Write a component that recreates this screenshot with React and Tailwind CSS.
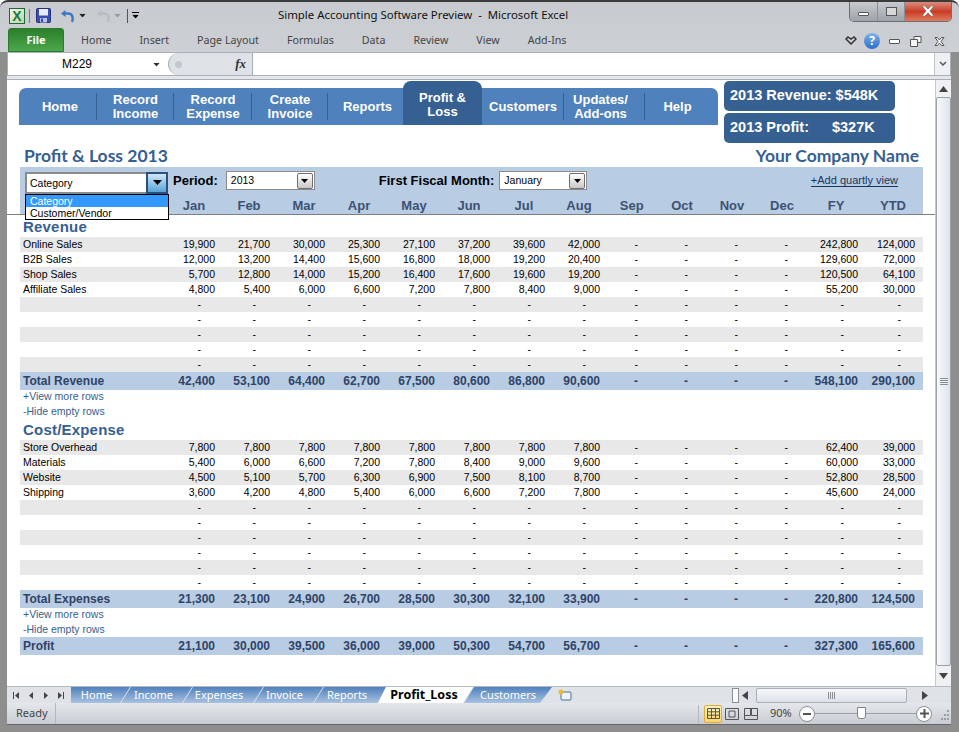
import React from 'react';

const navItems = [
  { label: ['Home'], width: 'w-[78px]', pad: 'pl-[4px]' },
  { label: ['Record', 'Income'], width: 'w-[77px]' },
  { label: ['Record', 'Expense'], width: 'w-[78px]' },
  { label: ['Create', 'Invoice'], width: 'w-[76px]' },
  { label: ['Reports'], width: 'w-[75px]', pad: 'pl-[4px]' },
  { label: ['Profit &', 'Loss'], width: 'w-[79px]', active: true },
  { label: ['Customers'], width: 'w-[82px]' },
  { label: ['Updates/', 'Add-ons'], width: 'w-[81px]', pad: 'pr-[8px]' },
  { label: ['Help'], width: 'w-[73px]', pad: 'pr-[8px]' },
];

const ribbonTabs = ['Home', 'Insert', 'Page Layout', 'Formulas', 'Data', 'Review', 'View', 'Add-Ins'];
const months = ['Jan', 'Feb', 'Mar', 'Apr', 'May', 'Jun', 'Jul', 'Aug', 'Sep', 'Oct', 'Nov', 'Dec', 'FY', 'YTD'];

const sheetTabs = [
  { name: 'Home', box: 'w-[59px] pr-[8px] [clip-path:polygon(0_0,100%_0,calc(100%-10px)_100%,0_100%)]' },
  { name: 'Income', box: 'w-[71px] -ml-[9px] pr-[6px] [clip-path:polygon(10px_0,100%_0,calc(100%-10px)_100%,0_100%)]' },
  { name: 'Expenses', box: 'w-[80px] -ml-[9px] pr-[8px] [clip-path:polygon(10px_0,100%_0,calc(100%-10px)_100%,0_100%)]' },
  { name: 'Invoice', box: 'w-[69px] -ml-[9px] pr-[8px] [clip-path:polygon(10px_0,100%_0,calc(100%-10px)_100%,0_100%)]' },
  { name: 'Reports', box: 'w-[72px] -ml-[9px] pr-[6px] [clip-path:polygon(10px_0,100%_0,calc(100%-8px)_100%,0_100%)]' },
  { name: 'Profit_Loss', active: true, box: 'w-[95px] -ml-[8px] pr-[3px] [clip-path:polygon(8px_0,100%_0,calc(100%-10px)_100%,0_100%)]' },
  { name: 'Customers', box: 'w-[88px] -ml-[9px] [clip-path:polygon(10px_0,100%_0,calc(100%-12px)_100%,0_100%)]' },
];

const blank = ['-', '-', '-', '-', '-', '-', '-', '-', '-', '-', '-', '-', '-', '-'];

const revenueRows = [
  ['Online Sales', '19,900', '21,700', '30,000', '25,300', '27,100', '37,200', '39,600', '42,000', '-', '-', '-', '-', '242,800', '124,000'],
  ['B2B Sales', '12,000', '13,200', '14,400', '15,600', '16,800', '18,000', '19,200', '20,400', '-', '-', '-', '-', '129,600', '72,000'],
  ['Shop Sales', '5,700', '12,800', '14,000', '15,200', '16,400', '17,600', '19,600', '19,200', '-', '-', '-', '-', '120,500', '64,100'],
  ['Affiliate Sales', '4,800', '5,400', '6,000', '6,600', '7,200', '7,800', '8,400', '9,000', '-', '-', '-', '-', '55,200', '30,000'],
  ['', ...blank], ['', ...blank], ['', ...blank], ['', ...blank], ['', ...blank],
];

const expenseRows = [
  ['Store Overhead', '7,800', '7,800', '7,800', '7,800', '7,800', '7,800', '7,800', '7,800', '-', '-', '-', '-', '62,400', '39,000'],
  ['Materials', '5,400', '6,000', '6,600', '7,200', '7,800', '8,400', '9,000', '9,600', '-', '-', '-', '-', '60,000', '33,000'],
  ['Website', '4,500', '5,100', '5,700', '6,300', '6,900', '7,500', '8,100', '8,700', '-', '-', '-', '-', '52,800', '28,500'],
  ['Shipping', '3,600', '4,200', '4,800', '5,400', '6,000', '6,600', '7,200', '7,800', '-', '-', '-', '-', '45,600', '24,000'],
  ['', ...blank], ['', ...blank], ['', ...blank], ['', ...blank], ['', ...blank], ['', ...blank],
];

const rowGrid = 'grid grid-cols-[140px_repeat(8,55px)_38px_50px_50px_50px_70px_57px_8px]';
const arial = "font-['Liberation_Sans',Arial,sans-serif]";
const segoe = "font-['Noto_Sans',sans-serif]";

// empty month cells sit further left than the figures, except Sep-Dec
const cellClass = (value, i) => {
  const isDash = value === '-';
  const midYear = i >= 8 && i < 12;
  return isDash && !midYear ? 'pr-[14px] text-right' : 'text-right';
};

const DataRow = ({ cells, shaded }) => (
  <div className={`${rowGrid} h-[15px] items-center text-[10.5px] leading-[15px] text-black ${shaded ? 'bg-[#e8e8e8]' : 'bg-white'}`}>
    <div className="pl-[3px] whitespace-nowrap">{cells[0]}</div>
    {cells.slice(1).map((c, i) => (
      <div key={i} className={cellClass(c, i)}>{c}</div>
    ))}
  </div>
);

const TotalRow = ({ cells }) => (
  <div className={`${rowGrid} h-[18px] items-center bg-[#b8cce4] text-[12px] font-bold leading-[18px] text-[#2f4366]`}>
    <div className="pl-[3px] whitespace-nowrap">{cells[0]}</div>
    {cells.slice(1).map((c, i) => (
      <div key={i} className="text-right">{c}</div>
    ))}
  </div>
);

const RowLinks = () => (
  <div className="-mt-[1px] text-[10.5px] text-[#366092]">
    <div className="flex h-[15px] items-center pl-[3px]">+View more rows</div>
    <div className="flex h-[15px] items-center pl-[3px]">-Hide empty rows</div>
  </div>
);

const SmallArrow = ({ className = 'fill-black' }) => (
  <svg width="9" height="5" viewBox="0 0 9 5" className={className}>
    <path d="M0 0h9L4.5 5z" />
  </svg>
);

const ComboButton = () => (
  <div className="flex h-[16px] w-[16px] items-center justify-center rounded-[2px] border border-[#6f6f6f] bg-gradient-to-b from-white to-[#c8c8c8]">
    <svg width="7" height="4" viewBox="0 0 7 4" className="fill-black">
      <path d="M0 0h7L3.5 4z" />
    </svg>
  </div>
);

const ExcelIcon = () => (
  <div className="flex h-[16px] w-[16px] items-center justify-center border border-[#1e6b36] bg-gradient-to-br from-[#f3f8f1] to-[#b6d6a9] font-['Liberation_Sans',sans-serif] text-[14px] font-bold leading-none text-[#1d7a3a]">
    X
  </div>
);

const SaveIcon = () => (
  <svg width="15" height="15" viewBox="0 0 15 15">
    <rect x="0.5" y="0.5" width="14" height="14" rx="1" fill="#3b4fb0" stroke="#24307c" />
    <rect x="3" y="1" width="9" height="6.5" fill="#e8ecf8" />
    <rect x="4" y="10" width="7" height="4.5" fill="#b9c3e6" />
    <rect x="5" y="10.5" width="2" height="3.5" fill="#3b4fb0" />
  </svg>
);

const UndoIcon = ({ color }) => (
  <svg width="14" height="14" viewBox="0 0 14 14" fill="none">
    <path d="M12 13c1.5-4 .5-8.500-3.500-8.500H3" stroke={color} strokeWidth="2.400" />
    <path d="M1 4.500L5.500 1v7z" fill={color} />
  </svg>
);

const NavBar = () => (
  <div className="flex h-[37px] w-[699px] rounded-t-[7px] bg-[#4f81bd] text-center text-[13px] font-bold leading-[14px] text-white">
    {navItems.map((item, i) => (
      <div key={i} className={`relative flex shrink-0 items-center justify-center ${item.width} ${item.pad || ''}`}>
        {item.active && <div className="absolute bottom-0 left-0 right-0 h-[44px] rounded-t-[8px] bg-[#366092]" />}
        <div className="relative">
          {item.label.map((line) => (
            <div key={line} className={item.active ? '-translate-y-[2px]' : ''}>{line}</div>
          ))}
        </div>
        {i < 8 && !item.active && i !== 4 && (
          <div className="absolute right-0 top-[5px] h-[27px] w-px bg-[#366092]" />
        )}
      </div>
    ))}
  </div>
);

const Kpi = ({ label, value, gap }) => (
  <div className={`flex h-[30px] w-[171px] items-center rounded-[5px] bg-[#366092] pb-[1px] pl-[6px] text-[14.5px] font-bold leading-none text-white ${gap}`}>
    <span>{label}</span>
    <span>{value}</span>
  </div>
);

const CategoryCombo = () => (
  <div className="relative mt-[4px] h-[22px] w-[143px] shrink-0">
    <div className="flex h-[22px] items-center justify-between border-2 border-r-0 border-[#8c8c8c] bg-white pl-[3px] text-[10.5px]">
      <span className="pt-[3px]">Category</span>
      <div className="-my-[2px] flex h-[22px] w-[22px] items-center justify-center border-2 border-[#27527c] bg-gradient-to-b from-[#cfe7f8] to-[#5aa3d6]">
        <SmallArrow />
      </div>
    </div>
    <div className="absolute left-[0px] top-[22px] z-10 w-[144px] border border-black bg-white text-[10.5px] leading-[12px]">
      <div className="h-[12px] bg-[#3399ff] pl-[4px] text-white">Category</div>
      <div className="h-[12px] pl-[4px] text-black">Customer/Vendor</div>
    </div>
  </div>
);

const FilterBand = () => (
  <div className="ml-[13px] mr-[12px] h-[47px] bg-[#b8cce4]">
    <div className="flex h-[27px] items-center pl-[5px]">
      <CategoryCombo />
      <span className="ml-[5px] text-[13px] font-bold text-black">Period:</span>
      <div className="ml-[8px] flex h-[19px] w-[89px] items-center justify-between border border-[#8c8c8c] bg-white pl-[4px] pr-[1px] text-[10.5px]">
        <span>2013</span>
        <ComboButton />
      </div>
      <span className="ml-[64px] text-[13px] font-bold text-black">First Fiscal Month:</span>
      <div className="ml-[5px] flex h-[19px] w-[88px] items-center justify-between border border-[#8c8c8c] bg-white pl-[4px] pr-[1px] text-[10.5px]">
        <span>January</span>
        <ComboButton />
      </div>
      <a className="ml-auto mr-[25px] border-b border-[#17375e] text-[11px] leading-[12px] text-[#17375e]">+Add quartly view</a>
    </div>
    <div className="grid h-[20px] grid-cols-[146.500px_repeat(8,55px)_50.500px_50px_50px_50px_58px_56px] items-center pt-[2px] text-center text-[13px] font-bold text-[#3c5273]">
      <div />
      {months.map((m) => (
        <div key={m}>{m}</div>
      ))}
    </div>
  </div>
);

const Section = ({ title, rows, total, heading }) => (
  <div>
    <div className={`pl-[3px] text-[15px] font-bold tracking-[0.2px] text-[#366092] ${heading}`}>{title}</div>
    {rows.map((r, i) => (
      <DataRow key={i} cells={r} shaded={i % 2 === 0} />
    ))}
    <TotalRow cells={total} />
  </div>
);

const Sheet = () => (
  <div className={`relative flex-1 overflow-hidden bg-white ${arial}`}>
    <div className="flex pl-[12px] pt-[1px]">
      <div className="flex h-[44px] items-end">
        <NavBar />
      </div>
      <div className="ml-[6px] flex flex-col gap-[2px]">
        <Kpi label="2013 Revenue:" value="$548K" gap="gap-[4px]" />
        <Kpi label="2013 Profit:" value="$327K" gap="gap-[23px]" />
      </div>
    </div>
    <div className="flex h-[24px] items-end justify-between pb-[1px] pl-[17px] pr-[16px] font-['Lato',sans-serif] text-[17.500px] font-bold leading-[20px] text-[#366092]">
      <span>Profit &amp; Loss 2013</span>
      <span>Your Company Name</span>
    </div>
    <FilterBand />
    <div className="h-px bg-[#7f7f7f]" />
    <div className="ml-[13px] mr-[12px]">
      <Section
        title="Revenue"
        heading="h-[22px] leading-[24px]"
        rows={revenueRows}
        total={['Total Revenue', '42,400', '53,100', '64,400', '62,700', '67,500', '80,600', '86,800', '90,600', '-', '-', '-', '-', '548,100', '290,100']}
      />
      <RowLinks />
      <div className="h-[1px]" />
      <Section
        title="Cost/Expense"
        heading="h-[20px] leading-[20px]"
        rows={expenseRows}
        total={['Total Expenses', '21,300', '23,100', '24,900', '26,700', '28,500', '30,300', '32,100', '33,900', '-', '-', '-', '-', '220,800', '124,500']}
      />
      <RowLinks />
      <TotalRow cells={['Profit', '21,100', '30,000', '39,500', '36,000', '39,000', '50,300', '54,700', '56,700', '-', '-', '-', '-', '327,300', '165,600']} />
    </div>
  </div>
);

const ScrollTri = ({ dir }) => (
  <svg width="9" height="6" viewBox="0 0 9 6" className="fill-[#444]">
    <path d={dir === 'up' ? 'M0 6h9L4.500 0z' : 'M0 0h9L4.500 6z'} />
  </svg>
);

const VerticalScroll = () => (
  <div className="flex w-[16px] flex-col items-center border-l border-[#c2c7ce] bg-[#eef0f3]">
    <div className="flex h-[17px] items-center justify-center"><ScrollTri dir="up" /></div>
    <div className="flex h-[569px] w-[15px] items-center justify-center rounded-[2px] border border-[#9aa1ab] bg-gradient-to-r from-[#f7f8fa] to-[#dfe3e9]">
      <div className="flex w-[8px] flex-col gap-[1px]">
        <div className="h-px bg-[#8a8f96]" />
        <div className="h-px bg-[#8a8f96]" />
        <div className="h-px bg-[#8a8f96]" />
        <div className="h-px bg-[#8a8f96]" />
      </div>
    </div>
    <div className="flex flex-1 items-center justify-center"><ScrollTri dir="down" /></div>
  </div>
);

const SheetTabsBar = () => (
  <div className={`flex h-[17px] items-stretch border-t border-[#b5bac1] bg-[#dfe3e8] ${segoe}`}>
    <div className="flex w-[64px] items-center justify-between pl-[6px] pr-[7px] text-[#444]">
      <svg width="6" height="7" viewBox="0 0 6 7" className="fill-[#444]"><path d="M0 0h1v7H0zM6 0v7L2 3.500z" /></svg>
      <svg width="4" height="7" viewBox="0 0 4 7" className="fill-[#444]"><path d="M4 0v7L0 3.500z" /></svg>
      <svg width="4" height="7" viewBox="0 0 4 7" className="fill-[#444]"><path d="M0 0v7l4-3.500z" /></svg>
      <svg width="6" height="7" viewBox="0 0 6 7" className="fill-[#444]"><path d="M5 0h1v7H5zM0 0v7l4-3.500z" /></svg>
    </div>
    <div className="flex w-[661px] items-stretch">
      {sheetTabs.map((t) => (
        <div
          key={t.name}
          className={`flex shrink-0 items-center justify-center ${t.box} ${t.active
            ? 'relative z-10 bg-white text-[12.500px] font-bold text-black'
            : 'bg-gradient-to-b from-[#4f81bd] to-[#a9c1e0] text-[11px] text-white'}`}
        >
          {t.name}
        </div>
      ))}
      <div className="ml-[6px] flex items-center">
        <svg width="14" height="12" viewBox="0 0 14 12">
          <rect x="3" y="3" width="10" height="8" rx="1" fill="#eef3fa" stroke="#4b6f9c" />
          <circle cx="3" cy="3" r="2.500" fill="#f0b73a" />
        </svg>
      </div>
    </div>
    <div className="flex w-[8px] items-center">
      <div className="h-[15px] w-[7px] border border-[#8a8f96] bg-white" />
    </div>
    <div className="flex flex-1 items-center">
      <svg width="6" height="9" viewBox="0 0 6 9" className="ml-[2px] fill-[#444]"><path d="M6 0v9L0 4.500z" /></svg>
      <div className="ml-[8px] flex h-[15px] w-[151px] items-center justify-center rounded-[2px] border border-[#a9afb8] bg-gradient-to-b from-[#f6f7f9] to-[#dde1e6]">
        <div className="flex gap-[1px]">
          <div className="h-[7px] w-px bg-[#8a8f96]" />
          <div className="h-[7px] w-px bg-[#8a8f96]" />
          <div className="h-[7px] w-px bg-[#8a8f96]" />
          <div className="h-[7px] w-px bg-[#8a8f96]" />
        </div>
      </div>
      <svg width="6" height="9" viewBox="0 0 6 9" className="ml-[15px] fill-[#444]"><path d="M0 0v9l6-4.500z" /></svg>
    </div>
  </div>
);

const StatusBar = () => (
  <div className={`flex h-[22px] items-center border-b border-[#666] bg-gradient-to-b from-[#e4e7eb] to-[#c9cdd3] text-[11px] text-[#444] ${segoe}`}>
    <div className="flex h-full w-[49px] items-center border-r border-[#b4b8be] pl-[9px]">Ready</div>
    <div className="flex flex-1 items-center justify-end">
      <div className="mr-[5px] h-[18px] border-l border-[#b4b8be]" />
      <div className="flex h-[18px] w-[18px] items-center justify-center rounded-[2px] border border-[#e2a93b] bg-gradient-to-b from-[#fff3b8] to-[#fdd661]">
        <svg width="13" height="11" viewBox="0 0 13 11" fill="none" stroke="#555"><path d="M.5.500h12v10H.5zM.5 3.800h12M.5 7.200h12M4.500.500v10M8.500.500v10" /></svg>
      </div>
      <svg width="14" height="12" viewBox="0 0 14 12" fill="none" stroke="#555" className="ml-[3px]"><path d="M.5.500h13v11H.5z" /><path d="M4 3h6v6H4z" /></svg>
      <svg width="14" height="12" viewBox="0 0 14 12" fill="none" stroke="#555" className="ml-[5px]"><path d="M.5.500h13v11H.5zM6.500.500v7H.5M7.500.500v7h6" /></svg>
      <span className="ml-[12px] w-[29px] text-[11px]">90%</span>
      <div className="flex h-[16px] w-[16px] items-center justify-center rounded-full border border-[#8a8f96] bg-white">
        <div className="h-[2px] w-[8px] bg-[#555]" />
      </div>
      <div className="relative h-px w-[101px] bg-[#9aa0a8]">
        <div className="absolute left-[42px] -top-[6px] h-[12px] w-[9px] rounded-b-[3px] border border-[#7d838b] bg-white" />
      </div>
      <div className="flex h-[16px] w-[16px] items-center justify-center rounded-full border border-[#8a8f96] bg-white">
        <svg width="9" height="9" viewBox="0 0 9 9" className="fill-[#555]"><path d="M3.500 0h2v3.500H9v2H5.500V9h-2V5.500H0v-2h3.500z" /></svg>
      </div>
      {/* resize grip */}
      <svg width="19" height="20" viewBox="0 0 19 20" className="fill-[#9a9ea4]">
        <path d="M15 6h2v2h-2zM12 10h2v2h-2zM15 10h2v2h-2zM9 14h2v2H9zM12 14h2v2h-2zM15 14h2v2h-2z" />
      </svg>
    </div>
  </div>
);

export default function App() {
  return (
    <div className={`flex h-[732px] w-[959px] flex-col overflow-hidden rounded-t-[8px] border-t-2 border-[#3a3a3a] bg-gradient-to-b from-[#c7cbd0] via-[#f0f1f3] to-[#f5f6f7] ${segoe}`}>
      {/* title bar */}
      <div className="flex h-[25px] shrink-0 items-center pl-[9px] pt-[2px]">
        <ExcelIcon />
        <div className="ml-[4px] h-[14px] w-px bg-[#777]" />
        <div className="ml-[6px]"><SaveIcon /></div>
        <div className="ml-[9px]"><UndoIcon color="#3b78c4" /></div>
        <div className="ml-[4px]"><SmallArrow className="fill-[#222] scale-75" /></div>
        <div className="ml-[9px]"><UndoIcon color="#b9bcc0" /></div>
        <div className="ml-[3px]"><SmallArrow className="fill-[#9a9a9a] scale-75" /></div>
        <div className="ml-[5px] h-[14px] w-px bg-[#555]" />
        <div className="ml-[3px] flex flex-col items-center gap-[1px]">
          <div className="h-px w-[7px] bg-black" />
          <SmallArrow className="fill-black scale-75" />
        </div>
        <div className="-mt-[2px] ml-[138px] whitespace-pre text-[11.400px] text-[#111]">Simple Accounting Software Preview  -  Microsoft Excel</div>
        <div className="mb-[8px] ml-auto mr-[7px] flex h-[20px] w-[103px] overflow-hidden rounded-b-[5px] border border-t-0 border-[#6a6f76]">
          <div className="flex w-[28px] items-center justify-center border-r border-[#8a8f96] bg-gradient-to-b from-[#c7cbd0] to-[#9ea3a9]">
            <div className="mt-[6px] h-[4px] w-[11px] rounded-[1px] border border-[#555] bg-white" />
          </div>
          <div className="flex w-[27px] items-center justify-center border-r border-[#8a8f96] bg-gradient-to-b from-[#c7cbd0] to-[#9ea3a9]">
            <div className="h-[9px] w-[11px] border border-[#555] bg-[#d8d8d8]" />
          </div>
          <div className="flex flex-1 items-center justify-center bg-gradient-to-b from-[#d98b7c] via-[#c83c24] to-[#e07a5e]">
            <svg width="14" height="10" viewBox="0 0 14 10"><path d="M1 0h3l3 3 3-3h3L9 5l4 5h-3L7 7l-3 3H1l4-5z" fill="#fff" stroke="#555" strokeWidth=".5" /></svg>
          </div>
        </div>
      </div>

      {/* ribbon tabs */}
      <div className="flex h-[25px] shrink-0 items-end pl-[8px]">
        <div className="flex h-[24px] w-[56px] items-center justify-center rounded-t-[3px] border border-[#2c7a2c] bg-gradient-to-b from-[#2c7f2c] to-[#4ba84b] text-[11px] font-bold text-white">File</div>
        <div className="ml-[3px] flex h-[24px] items-center pt-[1px] text-[10.700px] text-[#444]">
          {ribbonTabs.map((t) => (
            <div key={t} className="whitespace-nowrap px-[14px]">{t}</div>
          ))}
        </div>
        <div className="mb-[3px] ml-auto mr-[14px] flex items-center">
          <svg width="12" height="10" viewBox="0 0 12 10" fill="none" stroke="#333" strokeWidth="1.500"><path d="M1 3l2-2 3 2 3-2 2 2-5 5z" /></svg>
          <div className="ml-[7px] flex h-[16px] w-[16px] items-center justify-center rounded-full bg-gradient-to-b from-[#7fb2ea] to-[#2a6fc9] text-[12px] font-bold leading-none text-white">?</div>
          <div className="ml-[9px] h-[5px] w-[11px] rounded-[1px] border border-[#555] bg-white" />
          <svg width="12" height="11" viewBox="0 0 12 11" fill="#f5f5f5" stroke="#555" className="ml-[10px]"><path d="M4 .500h7v6H4z" /><path d="M.5 3.500h7v7h-7z" /></svg>
          <svg width="11" height="9" viewBox="0 0 11 9" fill="#f5f5f5" stroke="#555" className="ml-[12px]"><path d="M1 .500h2.500L5.500 3l2-2.500H10L7 4.500 10 8.500H7.500l-2-2.500-2 2.500H1L4 4.500z" /></svg>
        </div>
      </div>

      {/* body with window frame */}
      <div className="flex min-h-0 flex-1 flex-col bg-[#8e8e8e] pb-[7px] pl-[7px] pr-[8px]">
        <div className="flex min-h-0 flex-1 flex-col bg-[#eceef1]">
          {/* formula bar */}
          <div className="flex h-[24px] shrink-0 border border-[#a9afb8] bg-white">
            <div className={`flex w-[160px] items-center ${arial} text-[12px] text-black`}>
              <span className="ml-[54px] w-[90px]">M229</span>
              <SmallArrow className="fill-[#333] scale-75" />
            </div>
            <div className="flex w-[84px] items-center justify-between rounded-l-full border-l border-[#a9afb8] bg-[#dee1e6] pl-[6px] pr-[6px] font-['Liberation_Serif',serif] text-[13px] font-bold italic text-[#333]">
              <div className="h-[7px] w-[7px] rounded-full bg-[#c4c8ce]" />
              <span>fx</span>
            </div>
            <div className="flex-1 border-l border-[#a9afb8]" />
            <div className="flex w-[16px] items-center justify-center border-l border-[#c2c7ce] bg-[#eef0f3]">
              <svg width="8" height="6" viewBox="0 0 8 6" fill="none" stroke="#555" strokeWidth="1.500"><path d="M1 1l3 3 3-3" /></svg>
            </div>
          </div>
          <div className="h-[4px] shrink-0 border-b border-[#a9afb8] bg-[#e4e6ea]" />
          {/* sheet */}
          <div className="flex min-h-0 flex-1">
            <Sheet />
            <VerticalScroll />
          </div>
          <SheetTabsBar />
          <StatusBar />
        </div>
      </div>
    </div>
  );
}
